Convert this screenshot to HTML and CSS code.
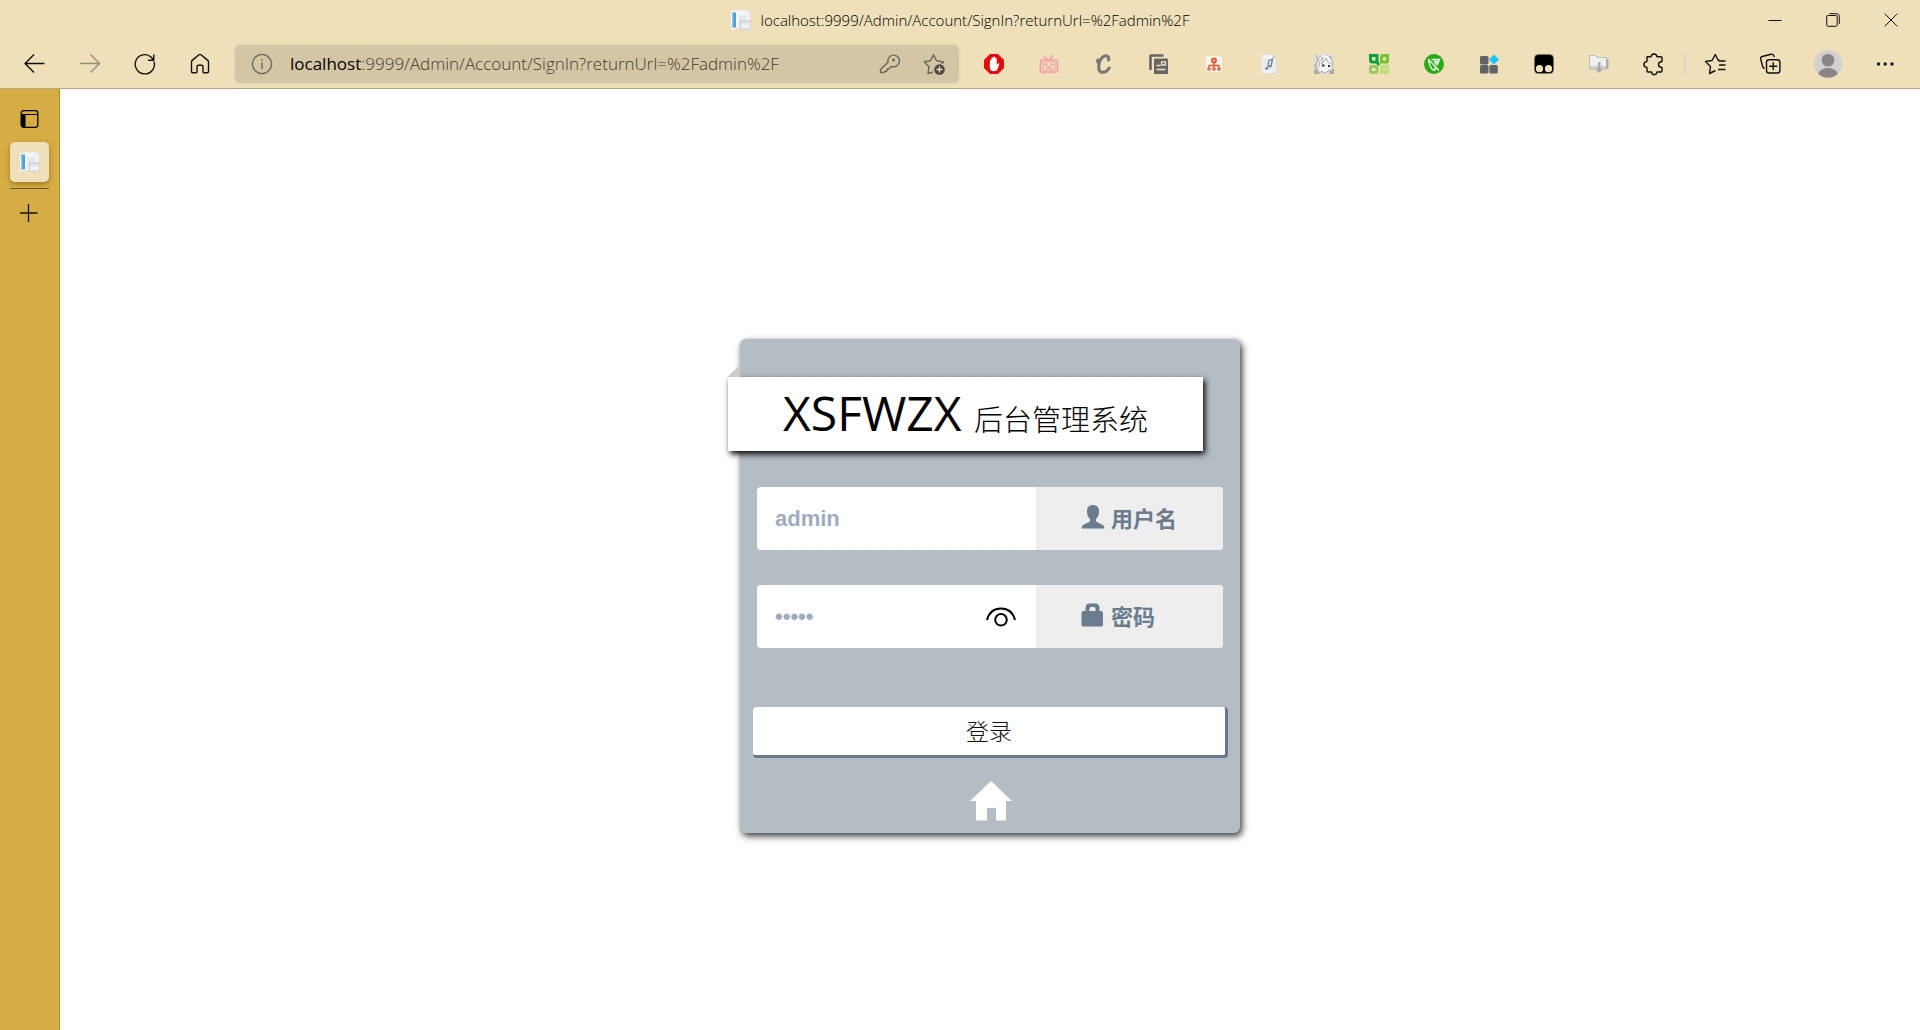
FILE: index.html
```html
<!DOCTYPE html>
<html lang="zh-CN">
<head>
<meta charset="utf-8">
<title>localhost:9999/Admin/Account/SignIn?returnUrl=%2Fadmin%2F</title>
<link rel="stylesheet" href="styles.css">
</head>
<body>
<svg class="sprite" aria-hidden="true">
  <symbol id="favicon" viewBox="0 0 20 20">
    <path d="M4 0h12l3 3v9H4z" fill="#f4f5f8" stroke="#dfe1e8" stroke-width=".7"/>
    <path d="M0 1h5v18H0z" fill="#f5f9fd"/>
    <path d="M1 2.500h4v15H1z" fill="#4f9fd8"/>
    <path d="M1 2.500h1.500v15H1z" fill="#8cc3e8"/>
    <path d="M5 2h3v16H5z" fill="#f4f5f8"/>
    <path d="M8 6h7M8 8h8M8 10h6" stroke="#d5d7df"/>
    <path d="M9 10.500h10.500v9H9z" fill="#e6e8ee" stroke="#ced1da" stroke-width=".8"/>
    <path d="M9 10.500h10.500v2H9z" fill="#d4d6de"/>
    <path d="M11 15h7v2h-7z" fill="#f8f9fb"/>
    <path d="M16 0v3h3" fill="#fff" stroke="#d4d6de" stroke-width=".7"/>
  </symbol>
</svg>

<header class="chrome">
  <div class="titlebar">
    <div class="caption">
      <svg class="icon20"><use href="#favicon"/></svg>
      <span>localhost:9999/Admin/Account/SignIn?returnUrl=%2Fadmin%2F</span>
    </div>
    <div class="window-controls">
      <button type="button" aria-label="Minimize"><svg class="icon14" viewBox="0 0 14 14"><path d="M.5 7.500h13" stroke="#111"/></svg></button>
      <button type="button" aria-label="Restore"><svg class="icon14" viewBox="0 0 14 14" fill="none" stroke="#111"><rect x=".7" y="2.500" width="10.500" height="10.800" rx="1.500"/><path d="M3.500.7h7q2.800 0 2.800 2.800v7.500"/></svg></button>
      <button type="button" aria-label="Close"><svg class="icon14" viewBox="0 0 14 14"><path d="M.7.7l12.600 12.600M13.300.7L.7 13.300" stroke="#111"/></svg></button>
    </div>
  </div>

  <div class="toolbar">
    <button class="tool" type="button" aria-label="Back"><svg class="icon24 line" viewBox="0 0 24 24"><path d="M21.500 11.500H2M11 2.500l-9 9 9 9"/></svg></button>
    <button class="tool" type="button" aria-label="Forward" disabled><svg class="icon24 line" viewBox="0 0 24 24"><path d="M2 11.500h19.500M12.500 2.500l9 9-9 9"/></svg></button>
    <button class="tool" type="button" aria-label="Refresh"><svg class="icon24 line" viewBox="0 0 24 24"><path d="M21 9.500A9.600 9.600 0 1 1 18.300 5.200L20.500 8M20.800 2.500V8.200h-5.800"/></svg></button>
    <button class="tool" type="button" aria-label="Home"><svg class="icon24 line" viewBox="0 0 24 24"><path d="M3.500 9.800Q3.500 9 4.200 8.400L11 2.700q1-.7 2 0l6.800 5.700q.7.600.7 1.400V19.500q0 1.200-1.200 1.200h-3.100q-1.200 0-1.200-1.200v-5q0-1.200-1.200-1.200h-3.600q-1.200 0-1.200 1.200v5q0 1.200-1.200 1.200H4.700q-1.200 0-1.200-1.200z"/></svg></button>

    <div class="address">
      <svg class="icon24 muted" viewBox="0 0 24 24"><circle cx="12" cy="12" r="9.600"/><path d="M12 10.500v6.500M12 7v1.800"/></svg>
      <a class="url" href="#"><b>localhost</b>:9999/Admin/Account/SignIn?returnUrl=%2Fadmin%2F</a>
      <button type="button" aria-label="Saved password"><svg class="icon24 muted" viewBox="0 0 24 24"><path d="M2.500 17.500l7.500-7.300A5.800 5.800 0 1 1 14 14.500l-1.500.5-1 1.700-2.300.3-.4 2.200-2.300.3-.4 1H2.500z"/><circle cx="15.500" cy="8" r=".8"/></svg></button>
      <button type="button" aria-label="Add to favorites"><svg class="icon24 muted" viewBox="0 0 24 24"><path d="M10 20l-5 1.500 1-6.800L1.300 9.800l6-1L10.500 2.800l3 6 7 1.200-2 2"/><circle cx="16.500" cy="17.500" r="5.300" fill="#4c483f" stroke="none"/><path d="M16.500 14.500v6M13.500 17.500h6" stroke="#e8ddc4"/></svg></button>
    </div>

    <button class="tool" type="button" aria-label="Ad blocker"><svg class="icon20" viewBox="0 0 20 20"><path d="M6 0h8l6 6v8l-6 6H6l-6-6V6z" fill="#e60b0b"/><path d="M6 6q1.200-.6 1.500.5V4q.9-1.400 1.700 0V3q.9-1.200 1.800 0v1q1.100-.9 1.700.4V11l1.200-1.500q1.500-.6 1.400.7L13.600 15q-1 2.300-3.600 2.300-4 0-4.300-4z" fill="#fff"/></svg></button>
    <button class="tool" type="button" aria-label="Video helper"><svg class="icon20" viewBox="0 0 20 20" fill="none" stroke="#f29aa7" stroke-width="1.600"><path d="M5 2l4 4M14.500 1L10 6"/><rect x="1.500" y="6" width="17" height="12" rx="1"/><rect x="4" y="8" width="12" height="8" stroke-width="1"/><path d="M5.500 11l3-1M11.500 10l3 1M7.500 13q1.200 1.300 2.500 0 1.300 1.300 2.500 0M4 18.700h2M14 18.700h2"/></svg></button>
    <button class="tool" type="button" aria-label="Script C"><svg class="icon20" viewBox="0 0 20 20" fill="none" stroke="#777" stroke-width="3" stroke-linecap="round"><path d="M14.500 6Q15.500 1.800 11.500 1.800 7.500 2.200 5.200 9q-1.600 8.500 2.500 9.300 4.800.4 7.500-4.300M5 9Q3 8 3.800 6" /></svg></button>
    <button class="tool" type="button" aria-label="Pages"><svg class="icon20" viewBox="0 0 20 20"><path d="M1.500 16V2q0-.5.500-.5h12.500" fill="none" stroke="#666" stroke-width="2.600"/><rect x="5" y="4.500" width="14" height="15.500" rx="1" fill="#666"/><path d="M7.500 11.500h4M7.500 15.500h9M12.500 8h4v3h-4z" stroke="#efe0ba" stroke-width="1.300" fill="none"/></svg></button>
    <button class="tool" type="button" aria-label="Site map"><svg class="icon20" viewBox="0 0 20 20"><rect x="2" y="2" width="16" height="16" rx="2" fill="#f7f5f2"/><g fill="none" stroke="#ea5525" stroke-width="1.300"><circle cx="10" cy="6.500" r="2" stroke-width="2"/><path d="M10 9v5M5 14v-2.500h10V14"/><circle cx="5" cy="15" r="1.200"/><circle cx="10" cy="15" r="1.200"/><circle cx="15" cy="15" r="1.200"/></g></svg></button>
    <button class="tool" type="button" aria-label="Music"><svg class="icon20" viewBox="0 0 20 20"><path d="M2.500.5h11l4 4v15h-15z" fill="#f2f2f2" stroke="#ddd"/><path d="M13.500.5v4h4" fill="#ccc"/><path d="M4 6h11M4 9h12M4 12h12M4 15h10" stroke="#d8d8d8"/><path d="M8.500 14.500L10 6.500l3.500-1-1.500 6.500" fill="none" stroke="#668299" stroke-width="1.300"/><circle cx="7.700" cy="14.500" r="1.300" fill="#668299"/><circle cx="11.200" cy="12.300" r="1.300" fill="#668299"/></svg></button>
    <button class="tool" type="button" aria-label="Character"><svg class="icon20" viewBox="0 0 20 20"><path d="M0 0h20v20H0z" fill="#dedede"/><path d="M4 13Q2 5 8 2q8-2 10 6l-1 6-5 4H8z" fill="#f5f5f5"/><path d="M2 17Q1 7 7 2M5 13Q4 7 9 3q0 4-2 7 4-2 5-6 1 5 5 6M16 3q4 5 2 10M2 1l2 5M0 10l4 8M13 1l5 3M7 17l4 2 5-3" fill="none" stroke="#999" stroke-width=".8"/><path d="M8 10.500h2.500v2H8zM14 11h2v2h-2z" fill="#333"/><path d="M0 16l4 1 3 3H0zM16 17l4-3v6h-5z" fill="#aaa"/></svg></button>
    <button class="tool" type="button" aria-label="Clover"><svg class="icon20" viewBox="0 0 20 20" fill="none" stroke-width="3"><path d="M1.500 1.500H8V8H3q-1.500 0-1.500-1.500zM8 8l2 3" stroke="#08a33e"/><path d="M12.500 3q0-1.500 1.500-1.500h4.500V7q0 1-1 1h-5z" stroke="#79c12e"/><rect x="1.500" y="12.500" width="6.500" height="6" rx="1" stroke="#9bcb60"/><path d="M11 11h9v8q0 1-1 1h-7q-1 0-1-1z" fill="#bee083"/><path d="M14 14h3v2h-3z" fill="#cde99c"/></svg></button>
    <button class="tool" type="button" aria-label="Cart"><svg class="icon20" viewBox="0 0 20 20"><circle cx="10" cy="10" r="10" fill="#2aa816"/><path d="M4.500 6q1 7 4.500 10h2V10.500M4 5l11 11.500M7.500 5.500h8l-2.500 6" fill="none" stroke="#e6f5e2" stroke-width="1.500"/><path d="M9 6.500h5.500l-1.500 4-2-.5z" fill="#d5edce"/></svg></button>
    <button class="tool" type="button" aria-label="Extension manager"><svg class="icon20" viewBox="0 0 20 20"><g fill="#5f6368"><rect x="1" y="2" width="8.500" height="8.500" rx="1.500"/><rect x="1" y="11" width="8.500" height="8.500" rx="1.500"/><rect x="10.300" y="11" width="8.500" height="8.500" rx="1.500"/></g><path d="M15 .5l5 5-5 5-5-5z" fill="#19c4f8"/></svg></button>
    <button class="tool" type="button" aria-label="User scripts"><svg class="icon20" viewBox="0 0 20 20"><rect x=".5" y=".5" width="19" height="19" rx="4" fill="#000" stroke="#777" stroke-width=".6"/><circle cx="5.500" cy="14.700" r="3.600" fill="#f1e1bd"/><circle cx="14.500" cy="14.700" r="3.600" fill="#f1e1bd"/></svg></button>
    <button class="tool" type="button" aria-label="Downloads folder"><svg class="icon20" viewBox="0 0 20 20"><path d="M.5 1.500h6l2 2h9v12H.5z" fill="#f0f0f0" stroke="#bdbdbd"/><path d="M17.500 5h2v9l-2 1.500z" fill="#aaa"/><path d="M1 12h16v3.500H1z" fill="#cfcfcf"/><path d="M9 8h2.500v6.500H14L10.200 19l-4-4.500H9z" fill="#aaa"/></svg></button>
    <button class="tool" type="button" aria-label="Extensions"><svg class="icon24 line" viewBox="0 0 24 24"><path d="M5 4.800h3.700q.5 0 .5-.5 0-2 2.800-2.300 2.800.3 2.800 2.300 0 .5.500.5H19q1 0 1 1v3.400q0 .6-.7.500-2.800.2-2.800 2.800t2.800 2.800q.7-.1.700.5V19q0 1-1 1h-3.700q-.5 0-.5.500 0 1.800-2.300 2.300-2.800-.3-2.800-2.300 0-.5-.5-.5H6q-1 0-1-1v-3.200q0-.5-.6-.6-2.400-.2-2.500-2.700.1-2.500 2.500-2.700.6-.1.600-.6z"/></svg></button>
    <span class="divider"></span>
    <button class="tool" type="button" aria-label="Favorites"><svg class="icon24 line" viewBox="0 0 24 24"><path d="M11.500 18.500L5.500 21.500l1-7L1.500 9.500l6.500-1L11.300 2.500l2.700 5.500h1.500M14.500 9H21.500M15 13h6.500M14 17.500h7.500"/></svg></button>
    <button class="tool" type="button" aria-label="Collections"><svg class="icon24 line" viewBox="0 0 24 24"><path d="M5.500 16.500Q4 16 3.500 14L1.700 7Q1.300 5 3.200 4.500L12 2.200q2-.5 2.700 1.300L15.300 5"/><rect x="7.500" y="7.700" width="13.400" height="13.300" rx="2.500"/><path d="M14.200 10.300v8M10.200 14.300h8"/></svg></button>
    <button class="tool profile" type="button" aria-label="Profile"><svg class="icon28" viewBox="0 0 28 28"><circle cx="14" cy="14" r="14" fill="#d2d0ce"/><circle cx="14" cy="10.300" r="6.300" fill="#8a8584"/><path d="M4 23.500Q7 18 14 18t10 5.500A14 14 0 0 1 4 23.500z" fill="#8a8584"/></svg></button>
    <button class="tool" type="button" aria-label="More"><svg class="icon24" viewBox="0 0 24 24" fill="#111"><circle cx="4.500" cy="12" r="1.700"/><circle cx="11.200" cy="12" r="1.700"/><circle cx="18" cy="12" r="1.700"/></svg></button>
  </div>
</header>

<div class="body">
  <aside class="tabs">
    <button class="tab" type="button" aria-label="Tab actions"><svg class="icon20" viewBox="0 0 20 20"><rect x="1.200" y="1.700" width="16.600" height="16.600" rx="2.500" fill="none" stroke="#000" stroke-width="1.300"/><path d="M1.500 5.500h16" stroke="#000"/><path d="M1 5.500h4.500V18H3q-2 0-2-2z"/></svg></button>
    <button class="tab current" type="button" aria-label="Sign in tab"><svg class="icon20"><use href="#favicon"/></svg></button>
    <button class="tab new" type="button" aria-label="New tab"><svg class="icon20" viewBox="0 0 20 20"><path d="M8.500 0v18M0 9h17.500" stroke="#111" stroke-width="1.300"/></svg></button>
  </aside>

  <main class="page">
    <form class="card" onsubmit="return false">
      <h1 class="banner">XSFWZX <small>后台管理系统</small></h1>
      <div class="fields">
        <div class="field">
          <input id="user" type="text" value="admin">
          <label for="user"><svg class="glyph" viewBox="0 0 24 24"><path d="M12 0q6 0 6 6.500 0 5-3 7.500v2.500l7 3.500q1.500 1 1.500 3.500H.5Q.5 21 2 20l7-3.500V14Q6 11.500 6 6.500 6 0 12 0z"/></svg>用户名</label>
        </div>
        <div class="field">
          <input id="pass" type="password" value="admin">
          <button class="reveal" type="button" aria-label="Show password"><svg viewBox="0 0 30 20" fill="none" stroke="#000" stroke-width="2"><path d="M1 13Q4 1.500 15 1.500T29 13"/><circle cx="15" cy="12.800" r="5.800"/></svg></button>
          <label for="pass"><svg class="glyph" viewBox="0 0 24 24"><path fill-rule="evenodd" d="M4.500 8V4.500Q5 .5 8.500.5h6q3.500 0 4 4V8h1.500q2 0 2 2v12q0 1.500-2 1.500H2.500Q.5 23.500.5 22V10q0-2 2-2zm4 0h6V5.500q0-1.500-1.500-1.500H10Q8.500 4 8.500 5.500z"/></svg>密码</label>
        </div>
      </div>
      <button class="submit" type="submit">登录</button>
      <a class="home" href="#" aria-label="首页"><svg viewBox="0 0 42 40"><path d="M21 0l21 20h-6v19.500H26V27h-9v12.500H6V20H0z" fill="#fff"/></svg></a>
    </form>
  </main>
</div>
</body>
</html>
```
FILE: styles.css
```css
* { box-sizing: border-box; }

body {
  margin: 0;
  min-height: 100vh;
  display: flex;
  flex-direction: column;
  font-family: "Open Sans", "Noto Sans CJK SC", sans-serif;
  background: #fff;
  color: #000;
}

button {
  margin: 0;
  padding: 0;
  border: 0;
  background: none;
  font: inherit;
  color: inherit;
}

svg { display: block; flex: none; }
.sprite { position: absolute; width: 0; height: 0; }
.icon14 { width: 14px; height: 14px; }
.icon20 { width: 20px; height: 20px; }
.icon24 { width: 24px; height: 24px; }
.icon28 { width: 28px; height: 28px; }

.line, .muted {
  fill: none;
  stroke: #111;
  stroke-width: 1.4;
  stroke-linejoin: round;
}
.muted { stroke: #6b675e; }

/* Browser frame */
.chrome {
  background: #efe0ba;
  border-bottom: 1px solid #b7a981;
}

.titlebar {
  display: grid;
  grid-template-columns: 1fr auto 1fr;
  align-items: center;
  height: 39px;
}
.caption {
  grid-column: 2;
  display: flex;
  align-items: center;
  gap: 10px;
  font-size: 15px;
  font-weight: 300;
  line-height: 20px;
}
.window-controls { display: flex; justify-content: flex-end; }
.window-controls button {
  display: grid;
  place-items: center;
  width: 58px;
  height: 39px;
}

.toolbar {
  display: flex;
  align-items: center;
  height: 49px;
  padding: 0 7px;
}
.tool {
  flex: none;
  display: grid;
  place-items: center;
  width: 55px;
  height: 40px;
}
.tool:disabled { opacity: .4; }
.profile { width: 60px; }
.divider {
  width: 2px;
  height: 20px;
  margin: 0 2px 0 3px;
  background: #d8d5cf;
}

.address {
  flex: 1;
  display: flex;
  align-items: center;
  height: 38px;
  margin: 0 7px 0 8px;
  padding: 0 12px 0 15px;
  border-radius: 5px;
  background: #d4c6a5;
  box-shadow: 0 0 4px #e2d4b0;
}
.url {
  flex: 1;
  margin-left: 16px;
  font-size: 17px;
  font-weight: 300;
  line-height: 24px;
  color: #3f3c35;
  text-decoration: none;
}
.url b { font-weight: 400; color: #000; }
.address button {
  display: grid;
  place-items: center;
  width: 24px;
  height: 24px;
  margin-left: 21px;
}

.body { flex: 1; display: flex; }

.tabs {
  width: 60px;
  padding: 10px;
  background: #d6ad45;
  border-right: 1px solid #a88a3c;
}
.tab {
  display: grid;
  place-items: center;
  width: 39px;
  height: 40px;
}
.current {
  margin: 3px 0 6px;
  border-radius: 5px;
  background: #efe0ba;
  box-shadow: 0 2px 5px rgba(90, 65, 0, .5);
}
.new {
  height: 50px;
  border-top: 1px solid #6d5a2b;
}

/* Sign-in page */
.page {
  flex: 1;
  display: flex;
  justify-content: center;
  align-items: flex-start;
  padding: 250px 16px 16px;
}
.card {
  display: flex;
  flex-direction: column;
  width: 500px;
  padding: 38px 12px 12px 13px;
  border-radius: 6px;
  background: #b4bcc4;
  box-shadow: 2px 3px 7px rgba(0, 0, 0, .8);
}

.banner {
  position: relative;
  width: 475px;
  height: 74px;
  margin: 0 0 36px -25px;
  background: #fff;
  box-shadow: 2px 3px 6px #000;
  font-size: 48px;
  font-weight: 400;
  line-height: 72px;
  text-align: center;
  white-space: nowrap;
}
.banner::before {
  content: "";
  position: absolute;
  left: 0;
  bottom: 100%;
  width: 12px;
  height: 12px;
  background: linear-gradient(to bottom right, transparent 50%, #ccc 50%);
}
.banner small {
  font-size: 29px;
  font-weight: 300;
}

.fields {
  display: grid;
  gap: 35px;
  padding: 0 5px 0 4px;
}
.field {
  display: flex;
  align-items: center;
  height: 63px;
  border-radius: 4px;
  overflow: hidden;
  background: #fff;
}
.field input {
  flex: 1;
  min-width: 0;
  height: 100%;
  padding: 0 0 0 18px;
  border: 0;
  outline: 0;
  background: none;
  font: bold 22px/28px "Liberation Sans", sans-serif;
  color: #9eacc0;
}
.reveal { margin-right: 20px; }
.reveal svg { width: 30px; height: 20px; }
.field label {
  display: flex;
  align-items: center;
  gap: 6px;
  width: 187px;
  height: 100%;
  padding: 0 0 3px 45px;
  background: #eee;
  font: bold 22px/28px "Noto Sans CJK SC", sans-serif;
  color: #6b7c8f;
}
.glyph { width: 24px; height: 24px; fill: #6b7c8f; }

.submit {
  height: 51px;
  margin-top: 59px;
  border-right: 3px solid #6b788c;
  border-bottom: 3px solid #6b788c;
  border-radius: 4px;
  background: #fff;
  font-size: 23px;
  font-weight: 300;
  line-height: 32px;
  color: #111;
}
.home { align-self: center; margin-top: 23px; }
.home svg { width: 42px; height: 40px; }
```
